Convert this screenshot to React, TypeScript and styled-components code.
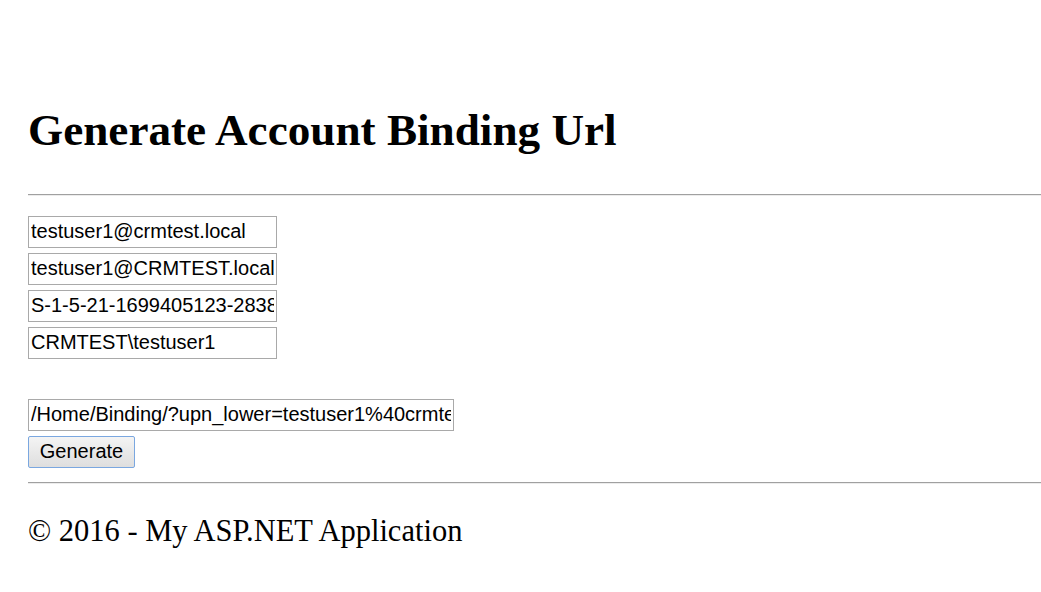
import React from "react";
import styled, { createGlobalStyle } from "styled-components";

const GlobalStyle = createGlobalStyle`
  html, body { margin: 0; padding: 0; background: #ffffff; }
  body { font-family: "Liberation Serif", "Times New Roman", serif; color: #000; }
`;

const Page = styled.div`
  padding: 0 0 0 28px;
  display: flex;
  flex-direction: column;
`;

const Title = styled.h1`
  margin: 104px 0 0 0;
  font-family: "Liberation Serif", "Times New Roman", serif;
  font-weight: bold;
  font-size: 45.2px;
  line-height: 52px;
  color: #000;
`;

const Rule = styled.hr<{ $top: number }>`
  margin: ${(p) => p.$top}px 0 0 0;
  border: 0;
  border-top: 1px solid #a0a0a0;
  border-bottom: 1px solid #ececec;
  height: 0;
`;

const Form = styled.div`
  margin-top: 20px;
  display: flex;
  flex-direction: column;
  align-items: flex-start;
`;

const FieldStack = styled.div`
  display: flex;
  flex-direction: column;
  gap: 5px;
`;

const Field = styled.input<{ $width: number }>`
  box-sizing: border-box;
  width: ${(p) => p.$width}px;
  height: 32px;
  margin: 0;
  padding: 0 2px 1px 2px;
  border: 1px solid #a9a9a9;
  border-radius: 0;
  font-family: "Liberation Sans", Arial, sans-serif;
  font-size: 20px;
  color: #000;
  background: #fff;
  outline: none;
`;

const UrlField = styled(Field)`
  margin-top: 40px;
`;

const Button = styled.button`
  box-sizing: border-box;
  margin-top: 5px;
  width: 107px;
  height: 32px;
  padding: 0 0 2px 0;
  border: 1px solid #7aa7e0;
  border-radius: 2px;
  background: linear-gradient(#f4f4f4, #dedede);
  font-family: "Liberation Sans", Arial, sans-serif;
  font-size: 20px;
  color: #000;
  cursor: pointer;
`;

const Footer = styled.footer`
  margin-top: 30px;
  font-family: "Liberation Serif", "Times New Roman", serif;
  font-size: 30.5px;
  line-height: 34px;
  color: #000;
`;

export default function App() {
  return (
    <>
      <GlobalStyle />
      <Page>
        <Title>Generate Account Binding Url</Title>
        <Rule $top={38} />
        <Form>
          <FieldStack>
            <Field $width={249} readOnly value="testuser1@crmtest.local" />
            <Field $width={249} readOnly value="testuser1@CRMTEST.local" />
            <Field $width={249} readOnly value="S-1-5-21-1699405123-2838491232-1234567890-1105" />
            <Field $width={249} readOnly value="CRMTEST\testuser1" />
          </FieldStack>
          <UrlField
            $width={426}
            readOnly
            value="/Home/Binding/?upn_lower=testuser1%40crmtest.local&upn=testuser1%40CRMTEST.local"
          />
          <Button type="button">Generate</Button>
        </Form>
        <Rule $top={14} />
        <Footer>© 2016 - My ASP.NET Application</Footer>
      </Page>
    </>
  );
}
